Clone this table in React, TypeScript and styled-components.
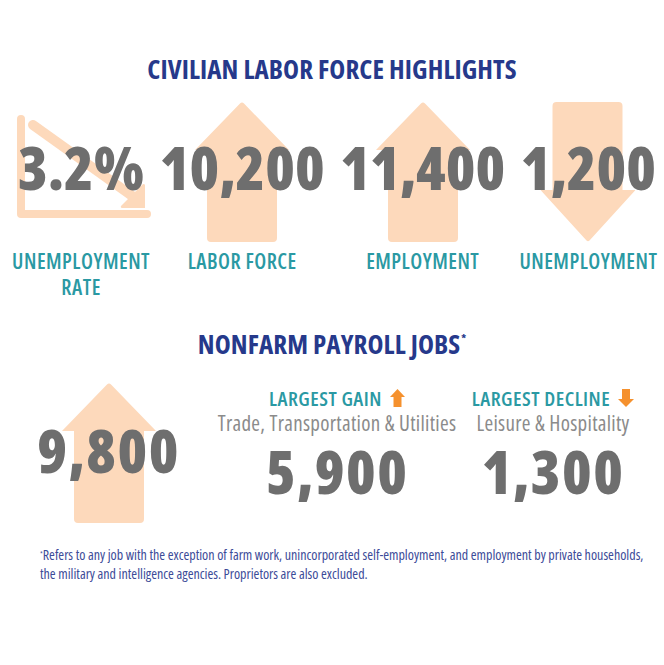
import styled, { createGlobalStyle } from "styled-components";

const Global = createGlobalStyle`
  body {
    margin: 0;
    background: #fff;
    font-family: "Open Sans", "Liberation Sans", sans-serif;
  }
`;

const PEACH = "#fdd9bb";
const NAVY = "#26398b";
const TEAL = "#2a99a3";
const GRAY = "#6e6e6e";
const ORANGE = "#f5912e";

function ArrowUp({ color = PEACH }: { color?: string }) {
  return (
    <svg width="94" height="140" viewBox="0 0 94 140">
      <path
        d="M45 1.5 Q47 -0.5 49 1.5 L94 48 L82 48 L82 136 Q82 140 78 140 L16 140 Q12 140 12 136 L12 48 L0 48 Z"
        fill={color}
      />
    </svg>
  );
}

function ArrowDown({ color = PEACH }: { color?: string }) {
  return (
    <svg width="95" height="140" viewBox="0 0 95 140">
      <path
        d="M16 0 L78 0 Q82 0 82 4 L82 88 L95 88 L49 138.5 Q47.5 140 46 138.5 L0 88 L12 88 L12 4 Q12 0 16 0 Z"
        fill={color}
      />
    </svg>
  );
}

function TrendDown() {
  return (
    <svg width="134" height="104" viewBox="0 0 134 104">
      <g stroke={PEACH} strokeLinecap="round" fill="none">
        <path d="M4 4 L4 99 L130 99" strokeWidth="8" strokeLinejoin="round" />
        <path d="M16 10 L118 83" strokeWidth="10" />
      </g>
      <path d="M128 93 L128 70 Q127 68 125 70 L104 91 Q103 93 106 93 Z" fill={PEACH} />
    </svg>
  );
}

function SmallUp() {
  return (
    <svg width="15" height="18" viewBox="0 0 15 18">
      <path d="M7.5 0 L15 8 L11.5 8 L11.5 18 L3.5 18 L3.5 8 L0 8 Z" fill={ORANGE} />
    </svg>
  );
}

function SmallDown() {
  return (
    <svg width="16" height="18" viewBox="0 0 16 18">
      <path d="M4 0 L12 0 L12 10 L16 10 L8 18 L0 10 L4 10 Z" fill={ORANGE} />
    </svg>
  );
}

const Page = styled.div`
  width: 664px;
  height: 665px;
  padding-top: 55px;
  box-sizing: border-box;
`;

const SectionTitle = styled.h2`
  margin: 0;
  text-align: center;
  font-size: 27px;
  line-height: 1;
  font-weight: 700;
  font-stretch: 75%;
  color: ${NAVY};
  letter-spacing: 0.1px;

  sup {
    font-size: 11px;
    vertical-align: top;
    position: relative;
    top: 2px;
    margin-left: 1px;
  }
`;

const StatRow = styled.div`
  display: flex;
  justify-content: space-between;
  padding: 0 8px 0 18px;
  margin-top: 20px;
`;

const Stat = styled.div`
  display: flex;
  flex-direction: column;
  align-items: center;
`;

const IconBox = styled.div<{ $height: number; $pad: number }>`
  position: relative;
  height: ${(p) => p.$height}px;
  padding-top: ${(p) => p.$pad}px;
  box-sizing: border-box;
`;

const Backdrop = styled.div<{ $top: number; $shift: number }>`
  position: absolute;
  top: ${(p) => p.$top}px;
  left: 50%;
  transform: translateX(calc(-50% + ${(p) => p.$shift}px));
  line-height: 0;
`;

const BigNumber = styled.div`
  position: relative;
  font-size: 60px;
  line-height: 1;
  font-weight: 800;
  font-stretch: 87.5%;
  color: ${GRAY};
  white-space: nowrap;
  letter-spacing: 0;
`;

/* zero-width so a long label can spill past its number without moving it */
const Label = styled.div`
  width: 0;
  display: flex;
  flex-direction: column;
  align-items: center;
  margin-top: 6px;
  font-size: 21px;
  line-height: 26px;
  font-weight: 600;
  font-stretch: 75%;
  letter-spacing: 0.5px;
  color: ${TEAL};
  white-space: nowrap;
`;

const PayrollSection = styled.div`
  margin-top: 30px;
`;

const PayrollRow = styled.div`
  display: grid;
  grid-template-columns: 185px 238px 160px;
  column-gap: 17px;
  padding-left: 16px;
  margin-top: 26px;
`;

const Column = styled.div`
  display: flex;
  flex-direction: column;
  align-items: center;
`;

const Heading = styled.div`
  display: flex;
  align-items: center;
  gap: 8px;
  margin-top: 3px;
  font-size: 20.5px;
  line-height: 24px;
  font-weight: 600;
  font-stretch: 75%;
  letter-spacing: 0.5px;
  color: ${TEAL};
  white-space: nowrap;
`;

const Sector = styled.div`
  font-size: 21px;
  line-height: 26px;
  font-weight: 400;
  font-stretch: 75%;
  letter-spacing: 0.3px;
  color: #8b8b8b;
  white-space: nowrap;
`;

const SubNumber = styled(BigNumber)<{ $gap: number }>`
  margin-top: ${(p) => p.$gap}px;
  letter-spacing: 1.5px;
`;

const Footnote = styled.p`
  margin: 22px 0 0 40px;
  font-size: 14px;
  line-height: 19px;
  font-weight: 400;
  font-stretch: 75%;
  color: #3c4b98;
  white-space: nowrap;

  sup {
    font-size: 7px;
    vertical-align: top;
    position: relative;
    top: -1px;
  }
`;

const stats = [
  { value: "3.2%", label: ["UNEMPLOYMENT", "RATE"], icon: "trend" },
  { value: "10,200", label: ["LABOR FORCE"], icon: "up" },
  { value: "11,400", label: ["EMPLOYMENT"], icon: "up" },
  { value: "1,200", label: ["UNEMPLOYMENT"], icon: "down" },
];

export default function App() {
  return (
    <Page>
      <Global />
      <SectionTitle>CIVILIAN LABOR FORCE HIGHLIGHTS</SectionTitle>
      <StatRow>
        {stats.map((s) => (
          <Stat key={s.value}>
            <IconBox $height={140} $pad={35}>
              <Backdrop $top={s.icon === "trend" ? 13 : 0} $shift={s.icon === "trend" ? 3 : 0}>
                {s.icon === "trend" && <TrendDown />}
                {s.icon === "up" && <ArrowUp />}
                {s.icon === "down" && <ArrowDown />}
              </Backdrop>
              <BigNumber>{s.value}</BigNumber>
            </IconBox>
            <Label>
              {s.label.map((l) => (
                <div key={l}>{l}</div>
              ))}
            </Label>
          </Stat>
        ))}
      </StatRow>

      <PayrollSection>
        <SectionTitle>
          NONFARM PAYROLL JOBS<sup>*</sup>
        </SectionTitle>
        <PayrollRow>
          <Column>
            <IconBox $height={140} $pad={37}>
              <Backdrop $top={0} $shift={0}>
                <ArrowUp />
              </Backdrop>
              <SubNumber $gap={0}>9,800</SubNumber>
            </IconBox>
          </Column>
          <Column>
            <Heading>
              LARGEST GAIN <SmallUp />
            </Heading>
            <Sector>Trade, Transportation &amp; Utilities</Sector>
            <SubNumber $gap={5}>5,900</SubNumber>
          </Column>
          <Column>
            <Heading>
              LARGEST DECLINE <SmallDown />
            </Heading>
            <Sector>Leisure &amp; Hospitality</Sector>
            <SubNumber $gap={5}>1,300</SubNumber>
          </Column>
        </PayrollRow>
      </PayrollSection>

      <Footnote>
        <sup>*</sup>Refers to any job with the exception of farm work, unincorporated self-employment, and
        employment by private households,
        <br />
        the military and intelligence agencies. Proprietors are also excluded.
      </Footnote>
    </Page>
  );
}
